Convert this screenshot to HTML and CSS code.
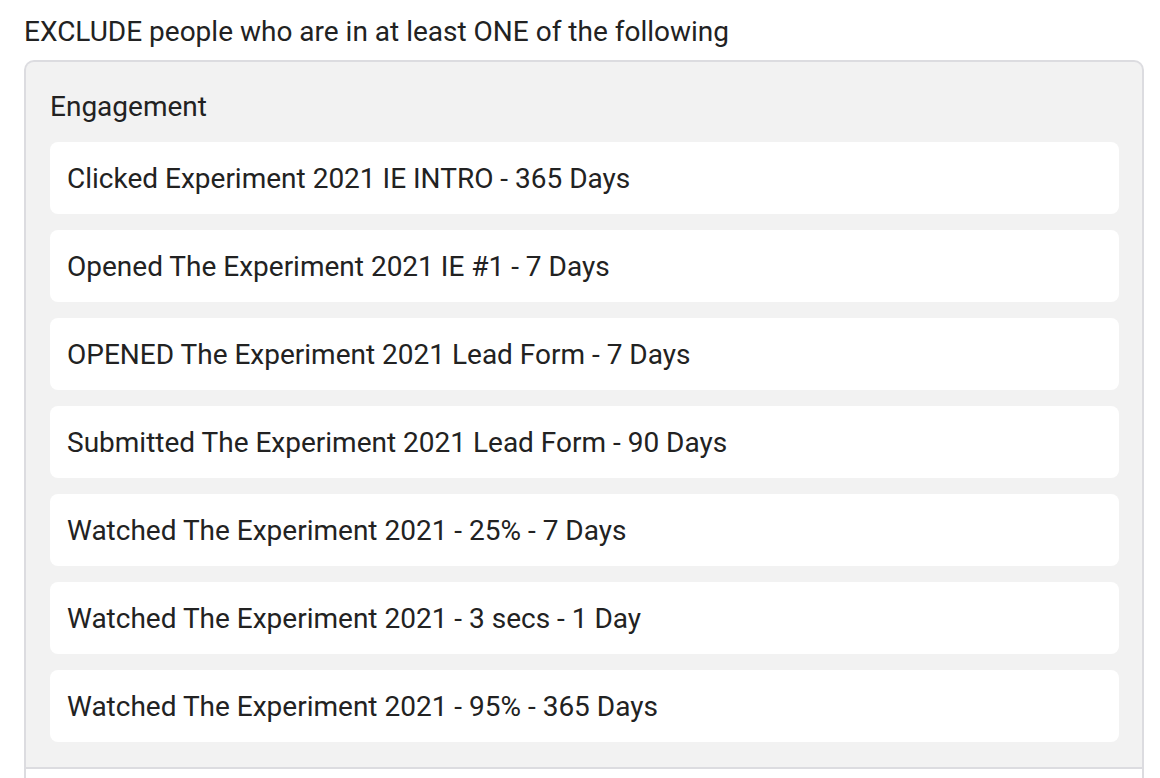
FILE: index.html
```html
<!DOCTYPE html>
<html>
<head>
<meta charset="utf-8">
<link rel="stylesheet" href="styles.css">
</head>
<body>
<div class="page">
  <div class="heading">EXCLUDE people who are in at least ONE of the following</div>
  <div class="box">
    <div class="section">
      <div class="label">Engagement</div>
      <div class="items">
        <div class="item">Clicked Experiment 2021 IE INTRO - 365 Days</div>
        <div class="item">Opened The Experiment 2021 IE #1 - 7 Days</div>
        <div class="item">OPENED The Experiment 2021 Lead Form - 7 Days</div>
        <div class="item">Submitted The Experiment 2021 Lead Form - 90 Days</div>
        <div class="item">Watched The Experiment 2021 - 25% - 7 Days</div>
        <div class="item">Watched The Experiment 2021 - 3 secs - 1 Day</div>
        <div class="item">Watched The Experiment 2021 - 95% - 365 Days</div>
      </div>
    </div>
    <div class="section-next"></div>
  </div>
</div>
</body>
</html>
```
FILE: styles.css
```css
html, body {
  margin: 0;
  padding: 0;
  background: #ffffff;
  overflow: hidden;
}
body {
  font-family: Roboto, "Liberation Sans", sans-serif;
  color: #222222;
}
.page {
  padding: 16px 16px 0 24px;
}
.heading {
  font-size: 28px;
  line-height: 32px;
  margin-bottom: 12px;
}
.box {
  border: 2px solid #dcdce0;
  border-bottom: none;
  border-radius: 10px 10px 0 0;
  background: #f2f2f2;
  overflow: hidden;
}
.section {
  padding: 27px 23px 25px 24px;
}
.label {
  font-size: 28px;
  line-height: 36px;
  margin-bottom: 17px;
}
.items {
  display: flex;
  flex-direction: column;
  gap: 16px;
}
.item {
  background: #ffffff;
  border-radius: 8px;
  height: 72px;
  display: flex;
  align-items: center;
  padding-left: 17px;
  font-size: 28px;
}
.section-next {
  border-top: 2px solid #dcdce0;
  background: #ffffff;
  height: 40px;
}
```
